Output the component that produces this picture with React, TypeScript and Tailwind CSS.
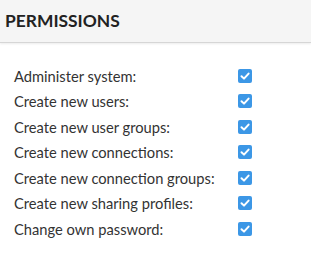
const permissions = [
  "Administer system:",
  "Create new users:",
  "Create new user groups:",
  "Create new connections:",
  "Create new connection groups:",
  "Create new sharing profiles:",
  "Change own password:",
];

function CheckedBox() {
  return (
    <span className="flex h-[14px] w-[14px] items-center justify-center rounded-[2px] bg-[#3c97e6]">
      <svg viewBox="0 0 14 14" className="h-[14px] w-[14px]" fill="none">
        <path d="M3.5 7.2 L6 9.6 L10.6 4.6" stroke="white" strokeWidth="2" strokeLinecap="round" strokeLinejoin="round" />
      </svg>
    </span>
  );
}

export default function App() {
  return (
    <div className="h-[253px] w-[311px] bg-white font-['Lato',sans-serif] text-[#333]">
      <header className="flex h-[43px] items-center border-b border-[#d6d6d6] bg-[#f5f5f5] px-[5px] shadow-[0_1px_2px_rgba(0,0,0,0.08)]">
        <h2 className="text-[17.4px] font-bold text-[#222]">PERMISSIONS</h2>
      </header>

      <div className="pt-[20px] pl-[14px]">
        {permissions.map((p) => (
          <div key={p} className="flex h-[25.5px] items-center">
            <span className="w-[224px] text-[14.7px]">{p}</span>
            <CheckedBox />
          </div>
        ))}
      </div>
    </div>
  );
}
